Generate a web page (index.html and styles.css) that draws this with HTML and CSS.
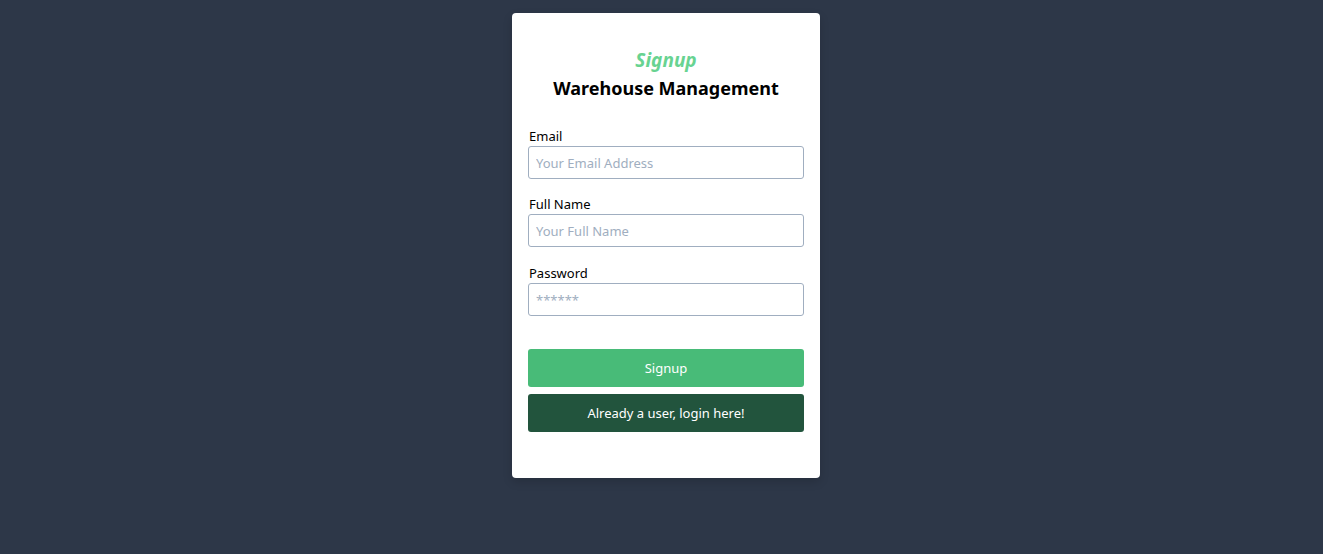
FILE: index.html
```html
<!DOCTYPE html>
<html>
<head>
<meta charset="utf-8">
<link rel="stylesheet" href="styles.css">
</head>
<body>
<div class="card">
  <div class="title">Signup</div>
  <h1 class="heading">Warehouse Management</h1>
  <form class="form">
    <div class="field">
      <label class="label">Email</label>
      <input class="input" type="text" placeholder="Your Email Address">
    </div>
    <div class="field">
      <label class="label">Full Name</label>
      <input class="input" type="text" placeholder="Your Full Name">
    </div>
    <div class="field field-last">
      <label class="label">Password</label>
      <input class="input" type="text" placeholder="******">
    </div>
    <div class="actions">
      <button type="button" class="btn btn-primary">Signup</button>
      <button type="button" class="btn btn-dark">Already a user, login here!</button>
    </div>
  </form>
</div>
</body>
</html>
```
FILE: styles.css
```css
* { box-sizing: border-box; }
body {
  margin: 0;
  padding-left: 9px;
  background: #2d3748;
  font-family: "Noto Sans", "Open Sans", sans-serif;
  min-height: 554px;
}
.card {
  width: 308px;
  margin: 13px auto 0;
  background: #fff;
  border-radius: 4px;
  padding: 35px 16px 46px;
  box-shadow: 0 4px 10px rgba(0,0,0,0.15);
}
.title {
  text-align: center;
  font-size: 19px;
  line-height: 24px;
  font-weight: 700;
  font-style: italic;
  color: #68d391;
}
.heading {
  margin: 3px 0 0;
  text-align: center;
  font-size: 18px;
  line-height: 26px;
  font-weight: 700;
  color: #000;
}
.form { margin-top: 26px; display: flex; flex-direction: column; }
.field { display: flex; flex-direction: column; margin-bottom: 16px; }
.field-last { margin-top: 1px; }
.label {
  font-size: 13px;
  line-height: 19px;
  color: #000;
  padding-left: 1px;
}
.input {
  height: 33px;
  border: 1px solid #a0aec0;
  border-radius: 3px;
  padding: 0 7px;
  font-family: inherit;
  font-size: 13px;
  color: #2d3748;
}
.input::placeholder { color: #a0aec0; }
.actions { margin-top: 17px; display: flex; flex-direction: column; gap: 7px; }
.btn {
  height: 38px;
  border: none;
  border-radius: 3px;
  color: #fff;
  font-family: inherit;
  font-size: 13px;
}
.btn-primary { background: #48bb78; }
.btn-dark { background: #22543d; }
```
